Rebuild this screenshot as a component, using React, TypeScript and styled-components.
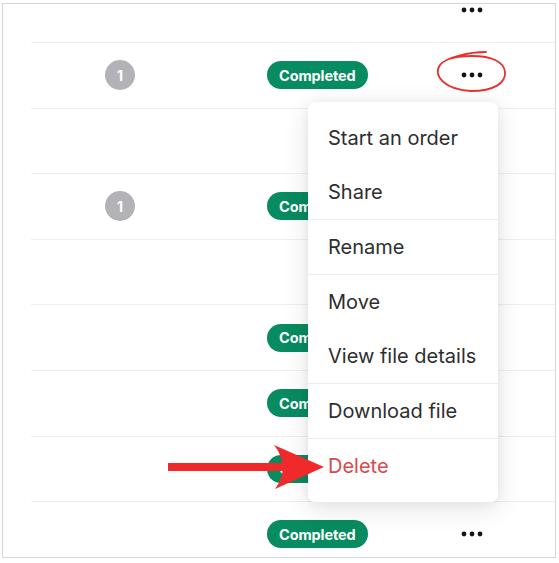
import * as React from 'react'
import styled, { createGlobalStyle } from 'styled-components'

interface FileRow {
  count?: number,
  status?: string
}

interface MenuGroup {
  items: Array<string>
}

const GlobalStyle = createGlobalStyle`
  html, body {
    margin: 0;
    padding: 0;
    background: #ffffff;
    font-family: Inter, "Noto Sans", sans-serif;
  }
`

const Page = styled.div`
  position: relative;
  width: 559px;
  height: 563px;
  overflow: hidden;
`

const Frame = styled.div`
  position: relative;
  box-sizing: border-box;
  margin: 3px 0 0 2px;
  width: 554px;
  height: 555px;
  border: 1px solid #d6d6d6;
  overflow: hidden;
  background: #ffffff;
`

const Table = styled.div`
  display: flex;
  flex-direction: column;
  margin-top: -26.6px;
  padding-left: 28px;
`

const Row = styled.div`
  box-sizing: border-box;
  display: grid;
  grid-template-columns: 178px 223px 80px;
  align-items: center;
  height: 65.6px;
  border-bottom: 1px solid #efefef;
`

const CountCell = styled.div`
  display: flex;
  justify-content: center;
`

const StatusCell = styled.div`
  padding-left: 58px;
`

const ActionCell = styled.div`
  display: flex;
  justify-content: center;
`

const Count = styled.span`
  display: flex;
  align-items: center;
  justify-content: center;
  width: 30px;
  height: 30px;
  border-radius: 50%;
  background: #b2b2b7;
  color: #ffffff;
  font-size: 14px;
  font-weight: 700;
`

const Badge = styled.span`
  display: inline-flex;
  align-items: center;
  height: 28px;
  padding: 0 12px;
  border-radius: 14px;
  background: #078b60;
  color: #ffffff;
  font-size: 14.5px;
  font-weight: 700;
  letter-spacing: -0.1px;
`

const DotsButton = styled.button`
  display: flex;
  align-items: center;
  justify-content: center;
  width: 32px;
  height: 24px;
  padding: 0;
  border: none;
  background: transparent;
`

const Menu = styled.div`
  position: absolute;
  left: 305px;
  top: 98px;
  width: 190px;
  padding: 9px 0;
  border-radius: 7px;
  background: #ffffff;
  box-shadow: 0 6px 26px rgba(0, 0, 0, 0.12), 0 0 10px rgba(0, 0, 0, 0.05);
`

const Group = styled.div<{ $first?: boolean }>`
  border-top: ${props => props.$first ? 'none' : '1px solid #ececec'};
`

const Item = styled.div<{ $danger?: boolean }>`
  display: flex;
  align-items: center;
  height: 54px;
  padding-left: 20px;
  font-size: 20px;
  color: ${props => props.$danger ? '#d9494b' : '#2e2e2e'};
`

const Annotations = styled.svg`
  position: absolute;
  left: 0;
  top: 0;
  pointer-events: none;
`

const rows: Array<FileRow> = [
  {},
  { count: 1, status: 'Completed' },
  {},
  { count: 1, status: 'Completed' },
  {},
  { status: 'Completed' },
  { status: 'Completed' },
  { status: 'Completed' },
  { status: 'Completed' }
]

const groups: Array<MenuGroup> = [
  { items: ['Start an order', 'Share'] },
  { items: ['Rename'] },
  { items: ['Move', 'View file details'] },
  { items: ['Download file'] },
  { items: ['Delete'] }
]

const Dots = () => (
  <svg width="22" height="6" viewBox="0 0 22 6">
    <circle cx="3" cy="3" r="2.4" fill="#151515" />
    <circle cx="11" cy="3" r="2.4" fill="#151515" />
    <circle cx="19" cy="3" r="2.4" fill="#151515" />
  </svg>
)

const App: React.FunctionComponent = () => {
  return (
    <>
      <GlobalStyle />
      <Page>
        <Frame>
          <Table>
            {
              rows.map((row, index) => (
                <Row key={`row-${index}`}>
                  <CountCell>{row.count && <Count>{row.count}</Count>}</CountCell>
                  <StatusCell>{row.status && <Badge>{row.status}</Badge>}</StatusCell>
                  <ActionCell>
                    <DotsButton aria-label="More actions"><Dots /></DotsButton>
                  </ActionCell>
                </Row>
              ))
            }
          </Table>
          <Menu>
            {
              groups.map((group, index) => (
                <Group key={`group-${index}`} $first={index === 0}>
                  {
                    group.items.map(item => (
                      <Item key={item} $danger={item === 'Delete'}>{item}</Item>
                    ))
                  }
                </Group>
              ))
            }
          </Menu>
        </Frame>
        {/* hand-drawn markers over the list */}
        <Annotations width="559" height="563" viewBox="0 0 559 563">
          <path
            d="M486 52 C470 52 446 57 440 65 C432 76 446 90 471 91 C494 91 506 83 505 72 C504 62 492 56 472 56 C462 56 454 57 449 59"
            fill="none"
            stroke="#e9302e"
            strokeWidth="1.8"
            strokeLinecap="round"
          />
          <rect x="168" y="463" width="122" height="8" fill="#f02a2a" />
          <path d="M274 445 L324 467 L275 489 Q291 467 274 445 Z" fill="#f02a2a" />
        </Annotations>
      </Page>
    </>
  )
}

export default App
